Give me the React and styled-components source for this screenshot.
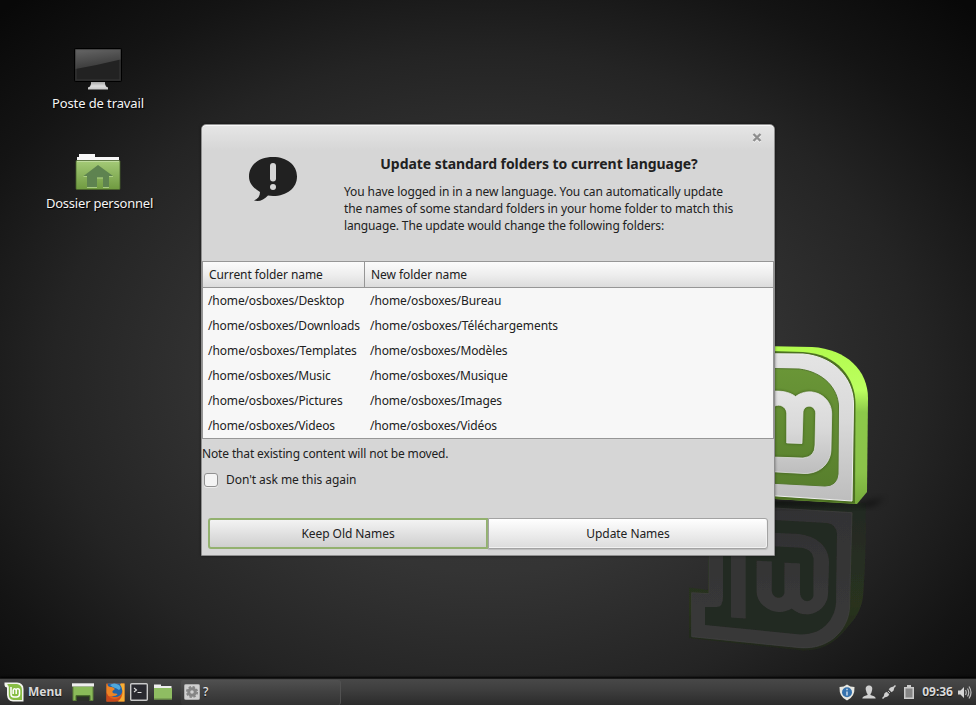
import React from "react";
import styled, { createGlobalStyle } from "styled-components";

const Global = createGlobalStyle`
  * { box-sizing: border-box; }
  body { margin: 0; background: #111; overflow: hidden; }
  button { font: inherit; color: inherit; padding: 0; }
`;

const Screen = styled.div`
  width: 976px;
  height: 705px;
  display: flex;
  flex-direction: column;
  overflow: hidden;
  font-family: "Noto Sans", sans-serif;
  font-size: 12px;
  color: #212121;
`;

const Desktop = styled.main`
  position: relative;
  flex: 1;
  overflow: hidden;
  background:
    radial-gradient(ellipse 640px 480px at 488px 380px, #3a3a3a 0%, #343434 40%, #242424 68%, #141414 88%, #080808 108%);
`;

const Wallpaper = styled.svg`
  position: absolute;
  left: 0;
  top: 0;
`;

const Shortcut = styled.div`
  position: absolute;
  left: 38px;
  top: ${(p) => p.$top}px;
  width: 120px;
  display: flex;
  flex-direction: column;
  align-items: center;
`;

const ShortcutLabel = styled.span`
  height: 18px;
  margin-top: 3px;
  padding-left: ${(p) => p.$indent || 0}px;
  line-height: 18px;
  font-size: 13px;
  letter-spacing: ${(p) => p.$spacing || 0}px;
  white-space: nowrap;
  color: #f4f4f4;
  text-shadow: 1px 1px 1px #000;
`;

const Dialog = styled.section`
  position: absolute;
  left: 201px;
  top: 124px;
  width: 574px;
  height: 432px;
  display: flex;
  flex-direction: column;
  border: 1px solid #8f8f8f;
  border-radius: 5px 5px 0 0;
  background: linear-gradient(#e6e6e6, #d6d6d6 25px);
  box-shadow: inset 0 1px #f8f8f8, 0 0 3px rgba(0, 0, 0, 0.5);
`;

const TitleBar = styled.header`
  height: 25px;
  display: flex;
  justify-content: flex-end;
  align-items: center;
  padding-right: 11px;
`;

const CloseButton = styled.button`
  width: 11px;
  height: 11px;
  display: flex;
  border: 0;
  background: none;
`;

const Message = styled.div`
  height: 111px;
  display: grid;
  grid-template-columns: 142px 1fr;
`;

const MessageIcon = styled.div`
  display: flex;
  justify-content: center;
  align-items: flex-start;
  padding-top: 7px;
`;

const MessageText = styled.div`
  width: 396px;
  padding-top: 5px;
`;

const Heading = styled.h1`
  margin: 0;
  padding-right: 6px;
  height: 18px;
  line-height: 18px;
  font-size: 14px;
  font-weight: 700;
  letter-spacing: -0.05px;
  text-align: center;
  white-space: nowrap;
`;

const Line = styled.div`
  height: 17px;
  line-height: 17px;
  white-space: nowrap;
  letter-spacing: ${(p) => p.$spacing || 0}px;
`;

const Body = styled.div`
  margin-top: 10px;
`;

const Table = styled.div`
  height: 178px;
  display: flex;
  flex-direction: column;
  border: 1px solid #969696;
  background: #f7f7f7;
`;

const Row = styled.div`
  height: 25px;
  display: grid;
  grid-template-columns: 162px 1fr;
  line-height: 25px;
`;

const HeaderRow = styled(Row)`
  height: 26px;
  line-height: 26px;
  letter-spacing: -0.07px;
  border-bottom: 1px solid #969696;
  background: linear-gradient(#fbfbfb, #eeeeee 50%, #dcdcdc);
`;

const HeaderCell = styled.div`
  height: 25px;
  padding-left: 6px;
  border-right: ${(p) => (p.$last ? "0" : "1px solid #969696")};
`;

const Cell = styled.div`
  padding-left: 5px;
  white-space: nowrap;
  letter-spacing: ${(p) => p.$spacing || 0}px;
`;

const Note = styled.p`
  margin: 6px 0 0;
  height: 18px;
  line-height: 18px;
  letter-spacing: -0.145px;
`;

const CheckLabel = styled.label`
  height: 18px;
  margin: 7px 0 0 2px;
  display: flex;
  align-items: center;
  gap: 8px;
  letter-spacing: -0.06px;
`;

const CheckBox = styled.span`
  width: 14px;
  height: 14px;
  margin-top: 2px;
  border: 1px solid #919191;
  border-radius: 3px;
  background: #f4f4f4;
  box-shadow: 0 1px #ececec;
`;

const Actions = styled.footer`
  display: grid;
  grid-template-columns: 280px 280px;
  margin: auto 0 6px 6px;
  height: 31px;
`;

const ActionButton = styled.button`
  display: flex;
  align-items: center;
  justify-content: center;
  letter-spacing: -0.06px;
  border: ${(p) => (p.$focused ? "2px solid #93b16f" : "1px solid #a3a3a3")};
  border-radius: ${(p) => (p.$focused ? "3px 0 0 3px" : "0 3px 3px 0")};
  background: ${(p) =>
    p.$focused ? "linear-gradient(#f3f3f3, #cfcfcf)" : "linear-gradient(#ffffff, #dcdcdc)"};
  box-shadow: ${(p) => (p.$focused ? "none" : "inset -1px -1px #f1f1f1, 0 1px 1px #bcbcbc")};
`;

const Panel = styled.nav`
  height: 27px;
  display: flex;
  align-items: center;
  border-top: 1px solid #191919;
  background: linear-gradient(#484848, #3d3d3d 45%, #2b2b2b);
  box-shadow: 0 -1px 2px #000;
  z-index: 1;
`;

const MenuButton = styled.div`
  width: 71px;
  padding-left: 4px;
  display: flex;
  align-items: center;
  gap: 4px;
`;

const PanelText = styled.span`
  color: ${(p) => (p.$plain ? "#e6e6e6" : "#d9d9d9")};
  font-weight: ${(p) => (p.$plain ? 500 : 700)};
  line-height: 18px;
  text-shadow: 0 1px 1px #111;
`;

const Launchers = styled.div`
  width: 110px;
  display: flex;
  align-items: center;
`;

const Slot = styled.span`
  display: flex;
  margin-left: ${(p) => p.$gap || 0}px;
`;

const TaskButton = styled.div`
  width: 160px;
  height: 25px;
  display: flex;
  align-items: center;
  gap: 3px;
  padding: 0 0 1px 3px;
  border-right: 1px solid #515151;
  border-radius: 3px;
  background: linear-gradient(#505050, #404040 50%, #323232);
`;

const Tray = styled.div`
  margin-left: auto;
  padding-right: 4px;
  display: flex;
  align-items: center;
`;

function MintWallpaper() {
  return (
    <Wallpaper width="976" height="678" viewBox="0 0 976 678">
      <defs>
        <linearGradient id="side" x1="0" y1="0" x2="0" y2="1">
          <stop offset="0" stopColor="#b2fb4d" />
          <stop offset="0.28" stopColor="#bcff60" />
          <stop offset="0.42" stopColor="#8cc84a" />
          <stop offset="0.8" stopColor="#8bc34a" />
          <stop offset="1" stopColor="#76aa3b" />
        </linearGradient>
        <linearGradient id="silver" x1="0" y1="0" x2="0" y2="1">
          <stop offset="0" stopColor="#e4e4e4" />
          <stop offset="0.45" stopColor="#d9d9d9" />
          <stop offset="1" stopColor="#bdbdbd" />
        </linearGradient>
        <linearGradient id="inner" x1="0" y1="0" x2="0" y2="1">
          <stop offset="0" stopColor="#6a9637" />
          <stop offset="1" stopColor="#587f2d" />
        </linearGradient>
        <linearGradient id="mirrorSide" x1="0" y1="0" x2="0" y2="1">
          <stop offset="0" stopColor="#232822" />
          <stop offset="0.7" stopColor="#29321f" />
          <stop offset="1" stopColor="#20271b" />
        </linearGradient>
        <linearGradient id="mirrorPlate" x1="0" y1="0" x2="0" y2="1">
          <stop offset="0" stopColor="#323233" />
          <stop offset="1" stopColor="#393939" />
        </linearGradient>
        <filter id="soft" x="-20%" y="-20%" width="140%" height="140%">
          <feGaussianBlur stdDeviation="1.2" />
        </filter>
        <filter id="ground" x="-20%" y="-60%" width="140%" height="220%">
          <feGaussianBlur stdDeviation="3" />
        </filter>
        <filter id="soften" x="-5%" y="-5%" width="110%" height="110%">
          <feGaussianBlur stdDeviation="0.6" />
        </filter>
      </defs>
      <g filter="url(#soften)">
        <path d="M700 500L866 503Q866 560 863 597C861 612 854 620 846 629C836 642 822 651 803 650.5L689 638V587.500L708 590V500Z" fill="url(#mirrorSide)" />
        <path d="M709 500V593.700L691.700 592.700V636.700L800 647.700C829 650 848 630 849.500 608L852 512.700L775 508Z" fill="url(#mirrorPlate)" stroke="#404040" strokeWidth="0.7" />
        <path d="M723 520V597Q723 607 716.700 607H705V625L800 634.500C824 635 835 618 836 603L837 534Q836 524 827 523L775 520Z" fill="#242923" />
        <path d="M731 520H745.700V618.500L731 617.500Z" fill="#363636" />
        <path d="M770 532.700L798 534C818 536 829 548 829 562L828 594C827 612 806 621 791.700 608.500C776 618 757 606 756.700 592V560.700L771.700 561.500V590C771.700 600 784.500 600 784.500 592V562.700L800 563.500V593C801 604 813 603 813.500 595V558Q812 549 801.700 547.700L770 546Z" fill="url(#mirrorPlate)" />
      </g>
      <path d="M750 498L857 504L885 498L872 506L750 506Z" fill="#000" opacity="0.6" filter="url(#ground)" />
      <path d="M740 345.500L812 347C847 349 868 371 868 398L867 492L857 504L740 497Z" fill="url(#side)" />
      <path d="M740 350L803 352C838 354 855.500 378 855.500 404L855 503.500L740 497Z" fill="#4d7122" />
      <path d="M740 353.500L803 354C836 357 853.500 380 853.500 404L852 501L740 493.500Z" fill="url(#silver)" stroke="#eee" strokeWidth="1" />
      <path d="M740 368L799 369C824 372 838 389 838.500 406L838 474Q837 486 825 486L740 481.500Z" fill="url(#inner)" stroke="#55782e" strokeWidth="1" />
      <path d="M740 391H775C785 391 791 393 795.500 396.500C811 385 832 396 831.700 414L831 449C831 463 820 474 804 473.500L740 470V456L803 458Q815 457 815 445L815.700 413C815 404 803 404 803 413L802 443.500L786.700 443V413C786 406 779 404 775 406Z" fill="#304a18" stroke="#304a18" strokeWidth="2" opacity="0.5" filter="url(#soft)" />
      <path d="M740 391H775C785 391 791 393 795.500 396.500C811 385 832 396 831.700 414L831 449C831 463 820 474 804 473.500L740 470V456L803 458Q815 457 815 445L815.700 413C815 404 803 404 803 413L802 443.500L786.700 443V413C786 406 779 404 775 406Z" fill="url(#silver)" stroke="#eaeaea" strokeWidth="0.7" />
    </Wallpaper>
  );
}

const MonitorIcon = () => (
  <svg width="48" height="43" viewBox="0 0 48 43">
    <defs>
      <linearGradient id="screenShine" x1="0.2" y1="0" x2="0.5" y2="1">
        <stop offset="0" stopColor="#737373" />
        <stop offset="1" stopColor="#3c3c3c" />
      </linearGradient>
      <linearGradient id="foot" x1="0" y1="0" x2="0" y2="1">
        <stop offset="0" stopColor="#999" />
        <stop offset="0.6" stopColor="#ddd" />
        <stop offset="1" stopColor="#c5c5c5" />
      </linearGradient>
    </defs>
    <path d="M17 33H31V36L32 38.500L34 39.500V41.500H14V39.500L16 38.500L17 36Z" fill="url(#foot)" />
    <rect x="0.500" y="0.500" width="47" height="33" rx="1" fill="#222" stroke="#000" />
    <path d="M1.500 1.500H46.500V11.500Q24 17 1.500 21Z" fill="url(#screenShine)" opacity="0.8" />
    <rect x="2" y="2" width="44" height="30" fill="none" stroke="#555" opacity="0.4" />
  </svg>
);

const HomeFolderIcon = () => (
  <svg width="46" height="37" viewBox="0 0 46 37">
    <defs>
      <linearGradient id="folderFill" x1="0" y1="0" x2="0" y2="1">
        <stop offset="0" stopColor="#a5cb78" />
        <stop offset="1" stopColor="#6f9a40" />
      </linearGradient>
    </defs>
    <path d="M2 9V3H4V0H20V3H44V9Z" fill="#f7f7f7" />
    <rect x="1" y="6.500" width="44" height="29" rx="1" fill="url(#folderFill)" stroke="#48622b" strokeWidth="0.8" />
    <path d="M2 7.500H44" stroke="#bfdb9d" />
    <path d="M8.500 22L23 11L38 22H34V33H28V23.500H22V33H12V22Z" fill="#5e8350" />
    <path d="M8.500 22.500H12M34 22.500H38M12 33.500H22M28 33.500H34M22 24H28" stroke="#b6d78f" strokeWidth="0.8" />
  </svg>
);

const AlertIcon = () => (
  <svg width="48" height="45" viewBox="0 0 48 45">
    <path d="M24 0C38 0 48 8 48 19.500S38 39 24 39L19 38.500C15 43 10 45 5 43.500C9 42 11 39 11 35C4 31 0 26 0 19.500C0 8 10 0 24 0Z" fill="#212121" />
    <rect x="21" y="6" width="6" height="18.500" rx="3" fill="#d6d6d6" />
    <circle cx="24" cy="30" r="3" fill="#d6d6d6" />
  </svg>
);

const CloseIcon = () => (
  <svg width="11" height="11" viewBox="0 0 11 11">
    <path d="M1.500 3L8.500 10M8.500 3L1.500 10" stroke="#f5f5f5" strokeWidth="2.400" />
    <path d="M1.500 2L8.500 9M8.500 2L1.500 9" stroke="#8d8d8d" strokeWidth="2.400" />
  </svg>
);

const MintIcon = () => (
  <svg width="20" height="20" viewBox="0 0 20 20">
    <path d="M0.500 0.500H13Q19.500 1 19.500 7V19.500H9Q3.500 19 3 13V5.500Q0.500 5 0.500 3Z" fill="#f2f4ed" />
    <path d="M3.500 2H13Q18 3 18 8V18H9.500Q5 17.500 4.800 13V5Q4.500 3.500 3.500 3Z" fill="#88bd45" />
    <path d="M7 5V12Q7 15 10 15H12.500Q15.500 15 15.500 12V8.500C15.500 6 12.200 6 12.200 8.500V12M12.200 8.500C12 6 9.200 6 9.200 8.500V12" fill="none" stroke="#fff" strokeWidth="1.500" />
  </svg>
);

const DesktopIcon = () => (
  <svg width="22" height="18" viewBox="0 0 22 18">
    <path d="M1 3.500H21V17.500H1Z" fill="#8aba59" stroke="#5f803b" />
    <path d="M4 17.500V12.500H18V17.500" fill="#2f4420" stroke="#4d6d31" />
    <rect x="5" y="14" width="12" height="4" fill="#2c2f29" />
    <rect x="0" y="0" width="22" height="3.500" fill="#eee" />
    <path d="M0 0.400H22" stroke="#a5a5a5" strokeWidth="0.800" />
  </svg>
);

const FirefoxIcon = () => (
  <svg width="19" height="19" viewBox="0 0 19 19">
    <rect x="0.500" y="0.500" width="18" height="18" fill="#dd611d" />
    <path d="M2 0.500H14.500Q17 3 16.500 8Q15 14 9 14Q5 14 4 10L5 6L1.500 3Z" fill="#2263a6" />
    <path d="M4 2Q8 -1 13 2Q16 5 13 7Q10 5 9 5Q6 4 4 2Z" fill="#4fa8dc" />
    <path d="M0.500 0.500Q2 4 4.500 4Q7 3.500 9 6L6.500 8Q6 10 8.500 10.500Q11 10 11.500 11.500Q9 13.500 6 13L2 13L0.500 10Z" fill="#ed8425" />
    <path d="M15 0.500H18.500V18.500H12Q17 14 16.500 8Q16 4 14 1.500Z" fill="#f6ae34" />
    <path d="M0.500 9Q2 15 8 16Q13 16 15.500 12Q14 18 8.500 18.500H0.500Z" fill="#c9491b" />
  </svg>
);

const TerminalIcon = () => (
  <svg width="18" height="18" viewBox="0 0 18 18">
    <rect x="0.700" y="0.700" width="16.600" height="16.600" rx="1" fill="#29292f" stroke="#c9c9c9" strokeWidth="1.400" />
    <path d="M4 5L6.500 7L4 9M7.500 9.500H11.500" fill="none" stroke="#ddd" strokeWidth="1.100" />
  </svg>
);

const FolderIcon = () => (
  <svg width="18" height="16" viewBox="0 0 18 16">
    <path d="M0 5V0.500H7V2H17.500V5Z" fill="#eee" />
    <path d="M0 4H18V15.500H0Z" fill="#8fbd62" />
    <path d="M0 15H18" stroke="#638345" />
  </svg>
);

const GearIcon = () => (
  <svg width="16" height="16" viewBox="0 0 16 16">
    <rect x="0.500" y="0.500" width="15" height="15" rx="1" fill="#cfcfcf" stroke="#aaa" />
    <circle cx="8" cy="8" r="5.200" fill="none" stroke="#858585" strokeWidth="1.700" strokeDasharray="2.400 1.684" />
    <circle cx="8" cy="8" r="3.300" fill="none" stroke="#858585" strokeWidth="3" />
  </svg>
);

const ShieldIcon = () => (
  <svg width="16" height="17" viewBox="0 0 16 17">
    <path d="M8 0.500Q11 3 15.500 3Q16 13 8 16.500Q0 13 0.500 3Q5 3 8 0.500Z" fill="#e7e7e1" />
    <circle cx="8" cy="8.300" r="5" fill="#3672ad" />
    <path d="M8 7.500V11.500M8 4.800V6.300" stroke="#c9d9ea" strokeWidth="1.500" />
  </svg>
);

const UserIcon = () => (
  <svg width="14" height="14" viewBox="0 0 14 14">
    <path d="M7 0.500C10 0.500 10.800 3 10 5.500Q9.500 8 8.500 9V10L12 11.200Q13.700 12 13.700 13.500H0.300Q0.300 12 2 11.200L5.500 10V9Q4.500 8 4 5.500C3.200 3 4 0.500 7 0.500Z" fill="#d0d0d0" />
  </svg>
);

const PlugIcon = () => (
  <svg width="14" height="14" viewBox="0 0 14 14">
    <path d="M0.500 13.500L4 10M10 4L13.500 0.500" stroke="#d0d0d0" strokeWidth="1.500" />
    <path d="M2.500 8.500L4.300 6.700L7.300 9.700L5.500 11.500Q3.500 12.500 2 12Q1.500 10 2.500 8.500Z" fill="#d0d0d0" />
    <path d="M6.700 4.300L8.500 2.500Q10.500 1.500 12 2Q12.500 3.500 11.500 5.500L9.700 7.300Z" fill="#d0d0d0" />
    <path d="M5.500 7.500L7.200 5.800M6.500 8.500L8.200 6.800" stroke="#c0c0c0" strokeWidth="1" />
  </svg>
);

const BatteryIcon = () => (
  <svg width="10" height="14" viewBox="0 0 10 14">
    <path d="M3 0H7V2H10V14H0V2H3Z" fill="#cacaca" />
    <rect x="1.500" y="3.500" width="7" height="9" fill="#858585" />
  </svg>
);

const SpeakerIcon = () => (
  <svg width="14" height="13" viewBox="0 0 14 13">
    <path d="M0 4.500H2.500L6 1V12L2.500 8.500H0Z" fill="#d5d5d5" />
    <path d="M7.500 4Q9 6.500 7.500 9M9.500 2.500Q12 6.500 9.500 10.500M11 0.500Q15 6.500 11 12.500" fill="none" stroke="#bbb" strokeWidth="1.200" />
  </svg>
);

const folders = [
  { from: "Desktop", to: "Bureau", fit: [-0.12, -0.08] },
  { from: "Downloads", to: "Téléchargements", fit: [-0.13, -0.03] },
  { from: "Templates", to: "Modèles", fit: [-0.05, -0.12] },
  { from: "Music", to: "Musique", fit: [-0.13, -0.15] },
  { from: "Pictures", to: "Images", fit: [-0.12, -0.1] },
  { from: "Videos", to: "Vidéos", fit: [-0.13, -0.13] },
];

export default function App() {
  return (
    <Screen>
      <Global />
      <Desktop>
        <MintWallpaper />
        <Shortcut $top={48}>
          <MonitorIcon />
          <ShortcutLabel $spacing={-0.1}>Poste de travail</ShortcutLabel>
        </Shortcut>
        <Shortcut $top={154}>
          <HomeFolderIcon />
          <ShortcutLabel $spacing={-0.21} $indent={3}>Dossier personnel</ShortcutLabel>
        </Shortcut>
        <Dialog>
          <TitleBar>
            <CloseButton aria-label="Close"><CloseIcon /></CloseButton>
          </TitleBar>
          <Message>
            <MessageIcon><AlertIcon /></MessageIcon>
            <MessageText>
              <Heading>Update standard folders to current language?</Heading>
              <Body>
                <Line $spacing={-0.1}>You have logged in in a new language. You can automatically update</Line>
                <Line $spacing={-0.105}>the names of some standard folders in your home folder to match this</Line>
                <Line $spacing={-0.14}>language. The update would change the following folders:</Line>
              </Body>
            </MessageText>
          </Message>
          <Table>
            <HeaderRow>
              <HeaderCell>Current folder name</HeaderCell>
              <HeaderCell $last>New folder name</HeaderCell>
            </HeaderRow>
            {folders.map(({ from, to, fit }) => (
              <Row key={from}>
                <Cell $spacing={fit[0]}>/home/osboxes/{from}</Cell>
                <Cell $spacing={fit[1]}>/home/osboxes/{to}</Cell>
              </Row>
            ))}
          </Table>
          <Note>Note that existing content will not be moved.</Note>
          <CheckLabel><CheckBox />Don't ask me this again</CheckLabel>
          <Actions>
            <ActionButton $focused>Keep Old Names</ActionButton>
            <ActionButton>Update Names</ActionButton>
          </Actions>
        </Dialog>
      </Desktop>
      <Panel>
        <MenuButton><MintIcon /><PanelText>Menu</PanelText></MenuButton>
        <Launchers>
          <Slot $gap={1}><DesktopIcon /></Slot>
          <Slot $gap={12}><FirefoxIcon /></Slot>
          <Slot $gap={5}><TerminalIcon /></Slot>
          <Slot $gap={6}><FolderIcon /></Slot>
        </Launchers>
        <TaskButton><GearIcon /><PanelText $plain>?</PanelText></TaskButton>
        <Tray>
          <Slot><ShieldIcon /></Slot>
          <Slot $gap={7}><UserIcon /></Slot>
          <Slot $gap={6}><PlugIcon /></Slot>
          <Slot $gap={8}><BatteryIcon /></Slot>
          <Slot $gap={8}><PanelText>09:36</PanelText></Slot>
          <Slot $gap={5}><SpeakerIcon /></Slot>
        </Tray>
      </Panel>
    </Screen>
  );
}
